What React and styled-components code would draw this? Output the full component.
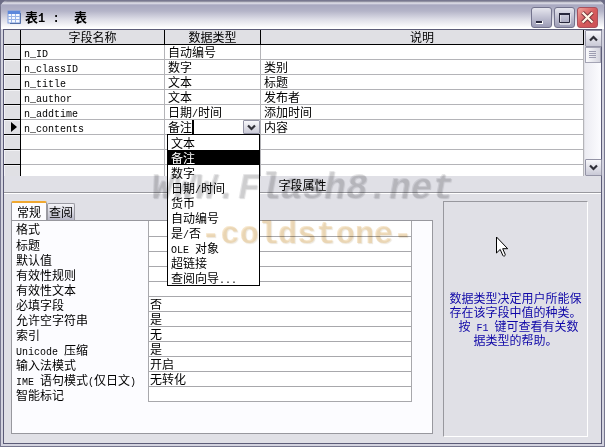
import React, { useState } from "react";
import styled, { createGlobalStyle } from "styled-components";

const GlobalStyle = createGlobalStyle`
  * {
    box-sizing: border-box;
  }
  body {
    margin: 0;
    background: #6c6c86;
    color: #000;
    font-family: "Noto Sans CJK SC", sans-serif;
    font-size: 12px;
    line-height: 14px;
  }
  input,
  button {
    margin: 0;
    padding: 0;
    font: inherit;
    color: inherit;
  }
`;

const Latin = styled.span`
  font-family: "Liberation Mono", monospace;
  font-size: ${(props) => (props.$large ? "12px" : "10px")};
  line-height: 1px;
  white-space: pre;
`;

const Window = styled.div`
  position: relative;
  display: flex;
  flex-direction: column;
  min-height: 100vh;
  border: 1px solid #77778f;
  border-radius: 7px 7px 0 0;
  background: #d3d3df;
  overflow: hidden;
`;

const TitleBar = styled.header`
  display: flex;
  align-items: center;
  gap: 3px;
  height: 28px;
  padding: 4px 6px 0 6px;
  background: linear-gradient(#77778b 0, #e4e4ec 2px, #a8a8c0 4px, #b4b4c8 10px, #dcdce6 18px, #fff 27px);
`;

const Title = styled.h1`
  flex: 1;
  margin: 0;
  font-size: 13px;
  line-height: 20px;
  font-weight: 700;
`;

const WindowButtons = styled.div`
  display: flex;
  gap: 2px;
`;

const WindowButton = styled.button`
  display: flex;
  width: 21px;
  height: 21px;
  border: 1px solid ${(props) => (props.$close ? "#a8505c" : "#74748e")};
  border-radius: 3px;
  background: ${(props) =>
    props.$close
      ? "linear-gradient(135deg, #f0a49c, #d65a5c 50%, #cc5056)"
      : "linear-gradient(#e6e6ee, #c0c0d2 50%, #9c9cb6)"};
  svg {
    margin: auto;
  }
`;

const Body = styled.main`
  flex: 1;
  display: flex;
  flex-direction: column;
  margin: 0 2px 2px;
  border: 1px solid #5c5c78;
  background: #e0e0e6;
`;

const DesignPane = styled.section`
  display: flex;
  height: 146px;
  background: #fff;
`;

const FieldTable = styled.table`
  flex: 1;
  width: 0;
  table-layout: fixed;
  border-collapse: separate;
  border-spacing: 0;
`;

const Col = styled.col`
  width: ${(props) => props.$width};
`;

const HeaderCell = styled.th`
  height: 15px;
  padding: 0;
  border-right: 1px solid #000;
  border-bottom: 1px solid #000;
  background: #e0e0e4;
  font-weight: 400;
  line-height: 14px;
`;

const SelectorCell = styled(HeaderCell)`
  height: ${(props) => (props.$last ? "11px" : "15px")};
  box-shadow: inset 1px 1px #f2f2f5;
  border-bottom-width: ${(props) => (props.$last ? "0" : "1px")};
  svg {
    display: block;
    margin-left: 7px;
  }
`;

const Cell = styled.td`
  height: ${(props) => (props.$last ? "11px" : "15px")};
  padding: 0 0 0 ${(props) => (props.$combo ? "0" : "3px")};
  border-right: 1px solid #b4b4b8;
  border-bottom: ${(props) => (props.$last ? "0" : "1px")} solid #b4b4b8;
  line-height: 14px;
  white-space: nowrap;
`;

const Combo = styled.div`
  position: relative;
  display: flex;
  height: 14px;
  padding-left: 3px;
`;

const ComboInput = styled.input`
  flex: 1;
  width: 0;
  height: 14px;
  border: 0;
  background: transparent;
  outline: none;
`;

const Caret = styled.span`
  position: absolute;
  left: 27px;
  width: 2px;
  height: 14px;
  background: #000;
`;

const ArrowButton = styled.button`
  display: flex;
  width: 17px;
  height: ${(props) => props.$height};
  border: 1px solid #9494a6;
  border-radius: 1px;
  background: linear-gradient(#f8f8fb, #c9c9d6);
  svg {
    margin: auto;
  }
`;

const Menu = styled.ul`
  position: absolute;
  top: 14px;
  left: 2px;
  right: 0;
  z-index: 2;
  margin: 0;
  padding: 0;
  border: 1px solid #000;
  background: #fff;
  list-style: none;
`;

const MenuItem = styled.li`
  height: 15px;
  padding-left: 3px;
  line-height: 15px;
  background: ${(props) => (props.$selected ? "#000" : "#fff")};
  color: ${(props) => (props.$selected ? "#fff" : "#000")};
`;

const ScrollBar = styled.div`
  display: flex;
  flex-direction: column;
  width: 17px;
  border-left: 1px solid #e0e0e6;
  background: linear-gradient(90deg, #ececf2, #fcfcff);
`;

const Thumb = styled.div`
  display: flex;
  height: 16px;
  margin-bottom: auto;
  border: 1px solid #a4a4b4;
  background: linear-gradient(90deg, #fafafc, #d4d4de);
  svg {
    margin: auto;
  }
`;

const PaneTitle = styled.h2`
  height: 18px;
  margin: 0;
  border-bottom: 1px solid #fff;
  box-shadow: inset 0 -1px #98989e;
  font-size: 12px;
  font-weight: 400;
  line-height: 18px;
  text-align: center;
`;

const PropertiesPane = styled.section`
  flex: 1;
  display: flex;
  gap: 10px;
  padding: 7px 13px 6px 7px;
`;

const TabbedArea = styled.div`
  flex: 1;
  display: flex;
  flex-direction: column;
  margin-bottom: 3px;
`;

const TabList = styled.div`
  display: flex;
  align-items: flex-end;
  height: 19px;
`;

const Tab = styled.button`
  width: ${(props) => (props.$active ? "36px" : "28px")};
  height: ${(props) => (props.$active ? "20px" : "17px")};
  margin-bottom: ${(props) => (props.$active ? "-1px" : "0")};
  border: 1px solid #9a9aa2;
  border-top: ${(props) => (props.$active ? "2px solid #f0a830" : "1px solid #9a9aa2")};
  border-bottom: 0;
  border-radius: 2px 2px 0 0;
  background: ${(props) => (props.$active ? "#fcfcff" : "linear-gradient(#f4f4f8, #b8b8c8)")};
  line-height: 16px;
`;

const PropertySheet = styled.div`
  flex: 1;
  padding-right: 20px;
  border: 1px solid #98989e;
  background: #fcfcff;
`;

const PropertyRow = styled.div`
  display: flex;
  height: 15px;
  &:first-child {
    height: 16px;
  }
`;

const PropertyLabel = styled.label`
  width: 136px;
  padding-left: 4px;
  line-height: 15px;
  white-space: nowrap;
`;

const PropertyInput = styled.input`
  flex: 1;
  min-width: 0;
  padding-left: 1px;
  border: 1px solid #a8a8ac;
  border-top: 0;
  border-radius: 0;
  background: #fff;
  outline: none;
`;

const HelpBox = styled.aside`
  display: flex;
  align-items: center;
  justify-content: center;
  width: 145px;
  border: 1px solid #98989e;
  border-right-color: #fff;
  border-bottom-color: #fff;
  color: #1008a8;
`;

const HelpText = styled.p`
  margin: 0;
  text-align: center;
  white-space: pre;
`;

const Watermark = styled.div`
  position: absolute;
  top: ${(props) => props.$top};
  left: ${(props) => props.$left};
  z-index: 3;
  font: ${(props) => props.$slant} 700 ${(props) => props.$size} / 40px "Liberation Mono", monospace;
  color: ${(props) => props.$color};
  text-shadow: 1px 1px 1px ${(props) => props.$edge};
  mix-blend-mode: multiply;
  pointer-events: none;
`;

const Pointer = styled.svg`
  position: absolute;
  top: 235px;
  left: 494px;
  z-index: 4;
`;

const fields = [
  { name: "n_ID", type: "自动编号", note: "" },
  { name: "n_classID", type: "数字", note: "类别" },
  { name: "n_title", type: "文本", note: "标题" },
  { name: "n_author", type: "文本", note: "发布者" },
  { name: "n_addtime", type: "日期/时间", note: "添加时间" },
  { name: "n_contents", type: "备注", note: "内容", current: true },
  { name: "", type: "", note: "" },
  { name: "", type: "", note: "" },
  { name: "", type: "", note: "", last: true },
];

const dataTypes = [
  "文本",
  "备注",
  "数字",
  "日期/时间",
  "货币",
  "自动编号",
  "是/否",
  "OLE 对象",
  "超链接",
  "查阅向导...",
];

const properties = [
  ["格式", ""],
  ["标题", ""],
  ["默认值", ""],
  ["有效性规则", ""],
  ["有效性文本", ""],
  ["必填字段", "否"],
  ["允许空字符串", "是"],
  ["索引", "无"],
  ["Unicode 压缩", "是"],
  ["输入法模式", "开启"],
  ["IME 语句模式(仅日文)", "无转化"],
  ["智能标记", ""],
];

// half-width characters get the monospaced face, the rest stays CJK
function MixedText({ children, large }) {
  return children
    .split(/([\x20-\x7e]+)/)
    .map((part, i) => (i % 2 ? <Latin key={i} $large={large}>{part}</Latin> : part));
}

function TableIcon() {
  return (
    <svg width="15" height="15" viewBox="0 0 15 15">
      <rect x="1" y="1" width="12" height="12" fill="#f4f8ff" stroke="#7c9cdc" />
      <path d="M1 1h12v3H1z" fill="#5c88dc" />
      <path d="M1 6.5h12M1 9.5h12M4.5 4v9M8.5 4v9" stroke="#98b4e8" />
      <path d="M13.5 3v10.5H3" fill="none" stroke="#5470a8" />
    </svg>
  );
}

function Chevron({ up }) {
  return (
    <svg width="9" height="7" viewBox="0 0 9 7">
      <path d={up ? "M1 5.5l3.5-3.5L8 5.500" : "M1 1.5L4.5 5 8 1.5"} fill="none" stroke="#303038" strokeWidth="2.2" />
    </svg>
  );
}

function TypeCombo({ value, onChange }) {
  return (
    <Combo>
      <ComboInput aria-label="数据类型" value={value} onChange={(e) => onChange(e.target.value)} />
      <Caret />
      <ArrowButton type="button" aria-label="展开" $height="14px">
        <Chevron />
      </ArrowButton>
      <Menu role="listbox">
        {dataTypes.map((type) => (
          <MenuItem
            key={type}
            role="option"
            aria-selected={type === value}
            $selected={type === value}
            onClick={() => onChange(type)}
          >
            <MixedText>{type}</MixedText>
          </MenuItem>
        ))}
      </Menu>
    </Combo>
  );
}

function FieldRow({ field, dataType, onTypeChange }) {
  return (
    <tr>
      <SelectorCell as="td" $last={field.last}>
        {field.current && (
          <svg width="7" height="10" viewBox="0 0 7 10">
            <path d="M0 0v10l6-5z" />
          </svg>
        )}
      </SelectorCell>
      <Cell $last={field.last}>
        <MixedText>{field.name}</MixedText>
      </Cell>
      <Cell $last={field.last} $combo={field.current}>
        {field.current ? (
          <TypeCombo value={dataType} onChange={onTypeChange} />
        ) : (
          <MixedText>{field.type}</MixedText>
        )}
      </Cell>
      <Cell $last={field.last}>{field.note}</Cell>
    </tr>
  );
}

function App() {
  const [dataType, setDataType] = useState("备注");

  return (
    <>
      <GlobalStyle />
      <Window>
        <TitleBar>
          <TableIcon />
          <Title>
            <MixedText large>{"表1 :  表"}</MixedText>
          </Title>
          <WindowButtons>
            <WindowButton type="button" aria-label="最小化">
              <svg width="15" height="15" viewBox="0 0 15 15">
                <path d="M2 11h7v3H2z" fill="#fff" />
                <path d="M2 11h6v2H2z" fill="#28283c" />
              </svg>
            </WindowButton>
            <WindowButton type="button" aria-label="最大化">
              <svg width="15" height="15" viewBox="0 0 15 15">
                <path d="M3 4h10v10H3z" fill="none" stroke="#fff" />
                <path d="M2.5 3.5h10v9h-10z" fill="none" stroke="#28283c" />
                <path d="M2 3h11v2H2z" fill="#28283c" />
              </svg>
            </WindowButton>
            <WindowButton type="button" aria-label="关闭" $close>
              <svg width="15" height="15" viewBox="0 0 15 15">
                <path d="M2.5 2.5l10 10M12.5 2.5l-10 10" stroke="#703038" strokeWidth="4" />
                <path d="M2.5 2.5l10 10M12.5 2.5l-10 10" stroke="#fff4e4" strokeWidth="2.4" />
              </svg>
            </WindowButton>
          </WindowButtons>
        </TitleBar>
        <Body>
          <DesignPane>
            <FieldTable>
              <colgroup>
                <Col $width="17px" />
                <Col $width="144px" />
                <Col $width="96px" />
                <Col $width="auto" />
              </colgroup>
              <thead>
                <tr>
                  <HeaderCell as="td" />
                  <HeaderCell>字段名称</HeaderCell>
                  <HeaderCell>数据类型</HeaderCell>
                  <HeaderCell>说明</HeaderCell>
                </tr>
              </thead>
              <tbody>
                {fields.map((field, i) => (
                  <FieldRow key={i} field={field} dataType={dataType} onTypeChange={setDataType} />
                ))}
              </tbody>
            </FieldTable>
            <ScrollBar>
              <ArrowButton type="button" aria-label="向上" $height="17px">
                <Chevron up />
              </ArrowButton>
              <Thumb>
                <svg width="8" height="8" viewBox="0 0 8 8">
                  <path d="M0 .5h7M0 2.5h7M0 4.5h7M0 6.5h7" stroke="#9c9cb0" />
                </svg>
              </Thumb>
              <ArrowButton type="button" aria-label="向下" $height="17px">
                <Chevron />
              </ArrowButton>
            </ScrollBar>
          </DesignPane>
          <PaneTitle>字段属性</PaneTitle>
          <PropertiesPane>
            <TabbedArea>
              <TabList role="tablist">
                <Tab type="button" role="tab" aria-selected="true" $active>
                  常规
                </Tab>
                <Tab type="button" role="tab" aria-selected="false">
                  查阅
                </Tab>
              </TabList>
              <PropertySheet>
                {properties.map(([label, value], i) => (
                  <PropertyRow key={label}>
                    <PropertyLabel htmlFor={`property-${i}`}>
                      <MixedText>{label}</MixedText>
                    </PropertyLabel>
                    <PropertyInput id={`property-${i}`} type="text" defaultValue={value} />
                  </PropertyRow>
                ))}
              </PropertySheet>
            </TabbedArea>
            <HelpBox>
              <HelpText>
                数据类型决定用户所能保{"\n"}
                存在该字段中值的种类。{"\n"}
                <MixedText>{" 按 F1 键可查看有关数"}</MixedText>
                {"\n"}
                据类型的帮助。
              </HelpText>
            </HelpBox>
          </PropertiesPane>
        </Body>
        <Watermark
          $top="168px"
          $left="150px"
          $size="36px"
          $slant="italic"
          $color="rgba(120, 120, 126, 0.16)"
          $edge="rgba(90, 90, 96, 0.2)"
        >
          WWW.Flash8.net
        </Watermark>
        <Watermark
          $top="214px"
          $left="200px"
          $size="32px"
          $slant="normal"
          $color="rgba(230, 175, 90, 0.3)"
          $edge="rgba(170, 140, 90, 0.22)"
        >
          -coldstone-
        </Watermark>
        <Pointer width="14" height="22" viewBox="0 0 14 22">
          <path
            d="M1.5 1v16l3.7-3.6 2.6 6q.5 1 1.6.6t.8-1.6L7.7 12.7h5z"
            fill="#fff"
            stroke="#000"
          />
        </Pointer>
      </Window>
    </>
  );
}

export default App;
